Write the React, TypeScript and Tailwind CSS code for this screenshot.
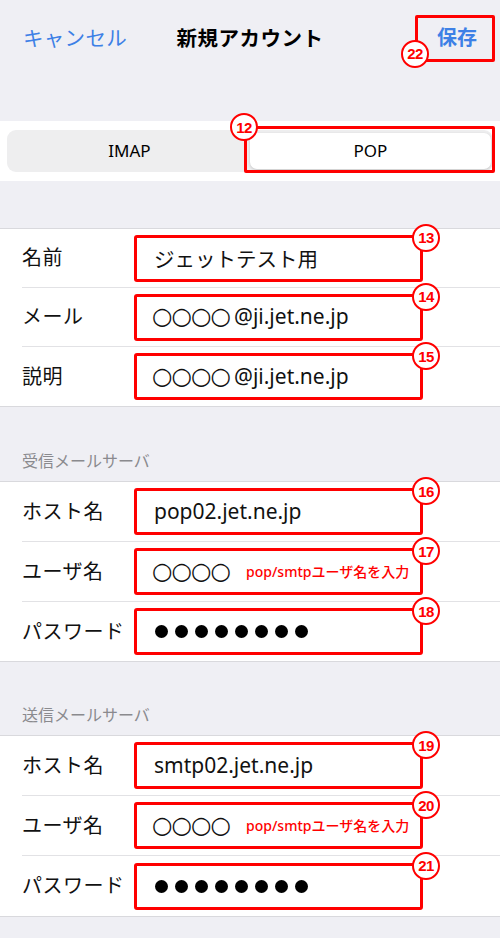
import React from "react";

const RED = "border-[#ff0000]";

function Badge({ n, className }: { n: string; className: string }) {
  return (
    <div
      className={`absolute w-[28px] h-[28px] rounded-full border-[2.5px] border-[#ff0000] bg-white flex items-center justify-center z-10 ${className}`}
    >
      <span className="font-['Liberation_Sans',sans-serif] font-bold text-[15px] leading-none tracking-[-0.5px] text-[#ff0000]">
        {n}
      </span>
    </div>
  );
}

function Circles() {
  return (
    <span className="font-['DejaVu_Sans',sans-serif] text-[23.5px] leading-none tracking-[-1px]">○○○○</span>
  );
}

function Dots() {
  return (
    <div className="flex gap-[7px] pl-[3px]">
      {Array.from({ length: 8 }).map((_, i) => (
        <div key={i} className="w-[13px] h-[13px] rounded-full bg-black" />
      ))}
    </div>
  );
}

function Row({
  label,
  badge,
  h,
  last,
  children,
}: {
  label: string;
  badge: string;
  h: string;
  last?: boolean;
  children: React.ReactNode;
}) {
  return (
    <div className="pl-[22px]">
      <div
        className={`flex items-center ${h} ${last ? "" : "border-b border-[#e2e2e5]"}`}
      >
        <span className="w-[112px] text-[20px] text-[#111] tracking-[0.5px] whitespace-nowrap">
          {label}
        </span>
        <div
          className={`relative w-[289px] h-[47px] border-[3px] ${RED} rounded-[3px] flex items-center pl-[15px] text-[21px] text-[#111] whitespace-nowrap`}
        >
          {children}
          <Badge n={badge} className="-right-[20px] -top-[14px]" />
        </div>
      </div>
    </div>
  );
}

function Header({ text, h }: { text: string; h: string }) {
  return (
    <div className={`${h} flex items-end pb-[10px] px-[22px]`}>
      <span className="text-[16px] leading-[20px] text-[#8a8a8e]">{text}</span>
    </div>
  );
}

function Note() {
  return (
    <span className="ml-[16px] text-[14px] font-medium text-[#ff0000]">
      pop/smtpユーザ名を入力
    </span>
  );
}

export default function App() {
  return (
    <div className="w-[500px] h-[938px] overflow-hidden bg-[#efeff4] font-['Noto_Sans','Noto_Sans_CJK_JP',sans-serif]">
      {/* Nav */}
      <div className="h-[121px]">
        <div className="h-[76px] grid grid-cols-[1fr_auto_1fr] items-center">
          <div className="pl-[23px] text-[20.5px] text-[#3d80e6] tracking-[0.3px]">キャンセル</div>
          <div className="text-[20.5px] font-bold text-black tracking-[0.5px]">新規アカウント</div>
          <div className="flex justify-end pr-[5px]">
            <div className={`relative w-[80px] h-[47px] border-[3px] ${RED} rounded-[2px] flex items-center justify-center pl-[4px] text-[20px] font-semibold text-[#3d80e6]`}>
              保存
              <Badge n="22" className="-left-[17px] -bottom-[9px]" />
            </div>
          </div>
        </div>
      </div>

      {/* Segmented */}
      <div className="bg-white h-[60px] px-[7px] py-[9px]">
        <div className="h-[42px] rounded-[9px] bg-[#eeeeef] px-[2px] pt-[3px] pb-[3px] flex">
          <div className="flex-1 flex items-center justify-center text-[17px] font-normal text-black">
            IMAP
          </div>
          <div className="flex-1 relative rounded-[7px] bg-white shadow-[0_1px_3px_rgba(0,0,0,0.18)] flex items-center justify-center text-[17px] font-normal text-black">
            POP
            <div className={`absolute -left-[6px] -right-[4px] -top-[7px] -bottom-[4px] border-[3px] ${RED} rounded-[2px]`}>
              <Badge n="12" className="-left-[17px] -top-[16px]" />
            </div>
          </div>
        </div>
      </div>

      <div className="h-[47px]" />

      {/* Group 1 */}
      <div className="bg-white border-y border-[#d9d9dd]">
        <Row label="名前" badge="13" h="h-[59px]">
          <span className="font-['Noto_Sans_CJK_JP',sans-serif] text-[20.5px] pl-[2px]">ジェットテスト用</span>
        </Row>
        <Row label="メール" badge="14" h="h-[59px]">
          <Circles />
          <span className="ml-[4px]">@ji.jet.ne.jp</span>
        </Row>
        <Row label="説明" badge="15" h="h-[59px]" last>
          <Circles />
          <span className="ml-[4px]">@ji.jet.ne.jp</span>
        </Row>
      </div>

      <Header text="受信メールサーバ" h="h-[74px]" />

      <div className="bg-white border-y border-[#d9d9dd]">
        <Row label="ホスト名" badge="16" h="h-[60px]">
          <span className="pl-[2px]">pop02.jet.ne.jp</span>
        </Row>
        <Row label="ユーザ名" badge="17" h="h-[60px]">
          <Circles />
          <Note />
        </Row>
        <Row label="パスワード" badge="18" h="h-[59px]" last>
          <Dots />
        </Row>
      </div>

      <Header text="送信メールサーバ" h="h-[73px]" />

      <div className="bg-white border-y border-[#d9d9dd]">
        <Row label="ホスト名" badge="19" h="h-[60px]">
          <span className="pl-[2px]">smtp02.jet.ne.jp</span>
        </Row>
        <Row label="ユーザ名" badge="20" h="h-[60px]">
          <Circles />
          <Note />
        </Row>
        <Row label="パスワード" badge="21" h="h-[60px]" last>
          <Dots />
        </Row>
      </div>
    </div>
  );
}
